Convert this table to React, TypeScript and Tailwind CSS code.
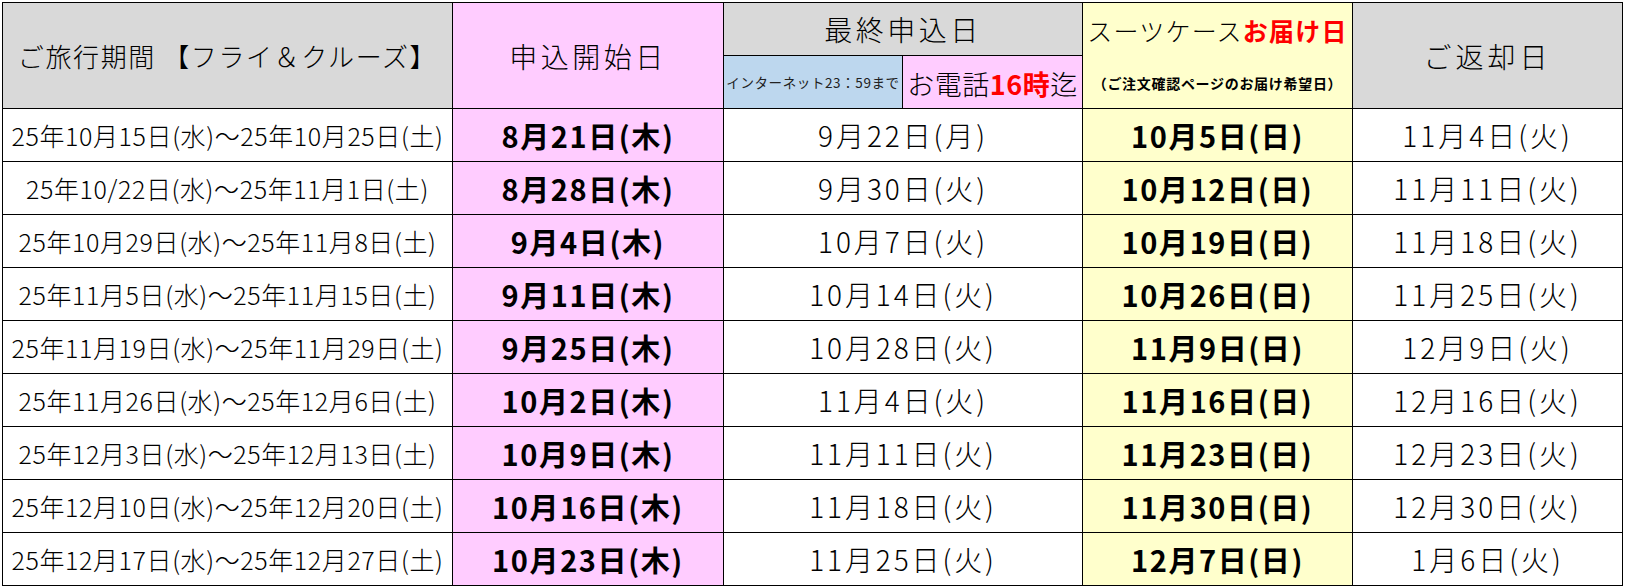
import React from "react";

const rows: [string, string, string, string, string][] = [
  ["25年10月15日(水)～25年10月25日(土)", "8月21日(木)", "9月22日(月)", "10月5日(日)", "11月4日(火)"],
  ["25年10/22日(水)～25年11月1日(土)", "8月28日(木)", "9月30日(火)", "10月12日(日)", "11月11日(火)"],
  ["25年10月29日(水)～25年11月8日(土)", "9月4日(木)", "10月7日(火)", "10月19日(日)", "11月18日(火)"],
  ["25年11月5日(水)～25年11月15日(土)", "9月11日(木)", "10月14日(火)", "10月26日(日)", "11月25日(火)"],
  ["25年11月19日(水)～25年11月29日(土)", "9月25日(木)", "10月28日(火)", "11月9日(日)", "12月9日(火)"],
  ["25年11月26日(水)～25年12月6日(土)", "10月2日(木)", "11月4日(火)", "11月16日(日)", "12月16日(火)"],
  ["25年12月3日(水)～25年12月13日(土)", "10月9日(木)", "11月11日(火)", "11月23日(日)", "12月23日(火)"],
  ["25年12月10日(水)～25年12月20日(土)", "10月16日(木)", "11月18日(火)", "11月30日(日)", "12月30日(火)"],
  ["25年12月17日(水)～25年12月27日(土)", "10月23日(木)", "11月25日(火)", "12月7日(日)", "1月6日(火)"],
];

const cell = "flex items-center justify-center border-r border-b border-black whitespace-nowrap";

export default function App() {
  return (
    <div
      className="w-[1625px] h-[588px] bg-white pt-[2px] pl-[2px] text-black"
      style={{ fontFamily: '"Noto Sans CJK JP", "Noto Sans", sans-serif' }}
    >
      <div className="grid w-[1621px] grid-cols-[450px_271px_179px_180px_270px_270px] grid-rows-[53px_53px_repeat(9,53px)] border-l border-t border-black">
        <div className={`${cell} row-span-2 bg-[#d9d9d9] text-[26px] font-light leading-none tracking-[1.6px]`}>
          ご旅行期間 【フライ＆クルーズ】
        </div>
        <div className={`${cell} row-span-2 bg-[#ffccff] text-[28px] font-light leading-none tracking-[3.5px]`}>
          申込開始日
        </div>
        <div className={`${cell} col-span-2 bg-[#d9d9d9] text-[28px] font-light leading-none tracking-[3.5px]`}>
          最終申込日
        </div>
        <div className={`${cell} row-span-2 flex-col bg-[#ffffcc]`}>
          <div className="flex h-[52px] items-center text-[25px] font-light leading-none tracking-[1.2px] pt-[3px]">
            スーツケース<span className="font-bold text-[#ff0000]">お届け日</span>
          </div>
          <div className="flex h-[53px] items-center text-[14px] font-bold leading-none tracking-[0.7px] pt-[2px]">
            （ご注文確認ページのお届け希望日）
          </div>
        </div>
        <div className={`${cell} row-span-2 bg-[#d9d9d9] text-[28px] font-light leading-none tracking-[4px]`}>
          ご返却日
        </div>
        <div className={`${cell} bg-[#bdd7ee] text-[13.5px] leading-none text-[#222] tracking-[0.6px] pt-[2px]`}>
          インターネット23：59まで
        </div>
        <div className={`${cell} bg-[#ffccff] text-[27px] font-light leading-none tracking-[0.5px] pt-[2px]`}>
          お電話<span className="font-bold text-[#ff0000]">16時</span>迄
        </div>
        {rows.map((r, i) => (
          <React.Fragment key={i}>
            <div className={`${cell} text-[25px] font-light leading-none tracking-[0.6px]`}>{r[0]}</div>
            <div className={`${cell} bg-[#ffccff] text-[29px] font-bold leading-none tracking-[1.6px]`}>{r[1]}</div>
            <div className={`${cell} col-span-2 text-[28px] font-light leading-none tracking-[2.9px]`}>{r[2]}</div>
            <div className={`${cell} bg-[#ffffcc] text-[29px] font-bold leading-none tracking-[1.6px]`}>{r[3]}</div>
            <div className={`${cell} text-[28px] font-light leading-none tracking-[3px]`}>{r[4]}</div>
          </React.Fragment>
        ))}
      </div>
    </div>
  );
}
